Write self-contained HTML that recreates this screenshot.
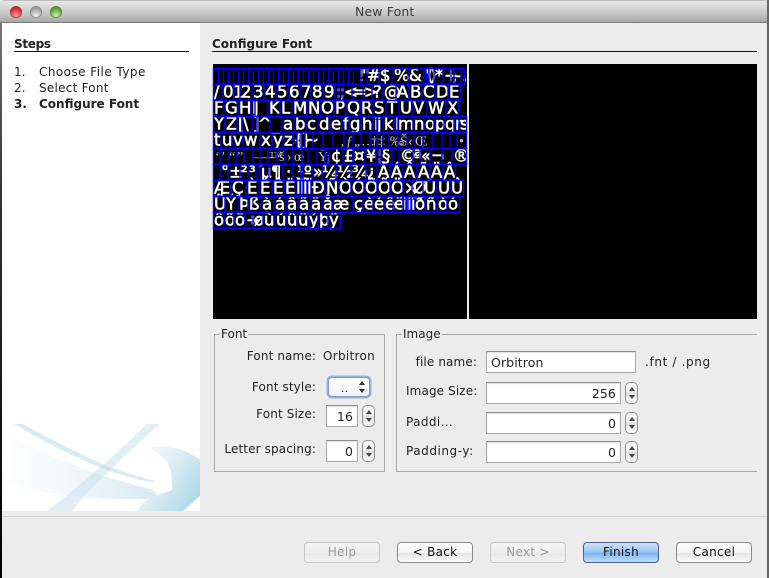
<!DOCTYPE html>
<html lang="en"><head><meta charset="utf-8"><title>New Font</title>
<style>
html,body{margin:0;padding:0;background:#555}
#w{position:relative;width:769px;height:578px;overflow:hidden;background:#ececec;font-family:"DejaVu Sans","Liberation Sans",sans-serif;font-size:12px;color:#222}
.t{position:absolute;white-space:nowrap;line-height:16px;letter-spacing:.12px}
.r{text-align:right}
.b{font-weight:bold;letter-spacing:0}
.f{position:absolute;box-sizing:border-box;background:#fff;border:1px solid #a9a9a9;border-top-color:#8e8e8e;box-shadow:inset 0 1px 1px #ddd;text-align:right;padding-right:4px;line-height:21px;height:22px;font-size:12.5px;letter-spacing:.1px}
.s{position:absolute;box-sizing:border-box;width:13px;height:22px;border:1px solid #8f8f8f;border-radius:5px;background:linear-gradient(#fff,#f4f4f4 45%,#ddd 50%,#fff)}
.s:before,.s:after{content:"";position:absolute;left:2.5px;border-left:3px solid transparent;border-right:3px solid transparent}
.s:before{top:4px;border-bottom:4px solid #444}
.s:after{bottom:4px;border-top:4px solid #444}
.g{position:absolute;box-sizing:border-box;border:1px solid #a8a8a8}
.g b{position:absolute;top:-9px;left:5px;background:#ececec;padding:0 1px;font-weight:normal;line-height:16px;font-size:12px}
.btn{position:absolute;top:542px;width:76px;height:21px;box-sizing:border-box;border:1px solid #8c8c8c;border-radius:4px;background:linear-gradient(#fff,#f5f5f5 50%,#e6e6e6 55%,#fbfbfb);text-align:center;line-height:18px;font-size:12px;color:#111;letter-spacing:.3px}
.dis{color:#999;border-color:#c4c4c4;background:linear-gradient(#f5f5f5,#eee 50%,#e8e8e8 55%,#f2f2f2)}
.def{border-color:#4d5f92;background:linear-gradient(#cfe2f8,#a0c6f0 45%,#7fb3ee 55%,#bfe0fb)}
</style></head><body><div id="w">

<div style="position:absolute;left:0;top:0;width:769px;height:23px;background:linear-gradient(#e8e8e8,#c9c9c9 55%,#a8a8a8);border-bottom:1px solid #7c7c7c;box-sizing:border-box;border-radius:5px 5px 0 0;border-top:1px solid #bbb"></div>
<div style="position:absolute;left:0;top:23px;width:2px;height:555px;background:linear-gradient(#777,#333 30%,#000)"></div>
<div style="position:absolute;right:0;top:0;width:2px;height:578px;background:#666"></div>
<svg style="position:absolute;left:0;top:0" width="80" height="24">
<defs>
<radialGradient id="ra" cx="50%" cy="80%" r="65%"><stop offset="0" stop-color="#ff9a94"/><stop offset="1" stop-color="#c8242a"/></radialGradient>
<radialGradient id="ga" cx="50%" cy="80%" r="65%"><stop offset="0" stop-color="#f0f0f0"/><stop offset="1" stop-color="#9b9b9b"/></radialGradient>
<radialGradient id="gr" cx="50%" cy="80%" r="65%"><stop offset="0" stop-color="#c8ee9c"/><stop offset="1" stop-color="#5a9a30"/></radialGradient>
</defs>
<circle cx="16" cy="12" r="5.7" fill="url(#ra)" stroke="#8a4a4a" stroke-width=".7"/>
<circle cx="36" cy="12" r="5.7" fill="url(#ga)" stroke="#808080" stroke-width=".7"/>
<circle cx="56" cy="12" r="5.7" fill="url(#gr)" stroke="#5a7a45" stroke-width=".7"/>
</svg>
<div class="t" style="left:355px;top:4px;color:#3c3c3c;font-size:12.5px">New Font</div>

<div style="position:absolute;left:2px;top:23px;width:198px;height:488px;background:#fff"></div>
<svg style="position:absolute;left:2px;top:424px" width="198" height="87" viewBox="2 424 198 87">
<defs>
<linearGradient id="l1" x1="0" x2="1" y1="0" y2="0"><stop offset="0" stop-color="#fff"/><stop offset=".5" stop-color="#eef6fa"/><stop offset="1" stop-color="#d6e9f2"/></linearGradient>
<linearGradient id="l2" x1="0" x2="1" y1="0" y2=".7"><stop offset="0" stop-color="#fff"/><stop offset=".45" stop-color="#e2f0f6"/><stop offset="1" stop-color="#b2d8e8"/></linearGradient>
</defs>
<path d="M2 433Q60 462 107 477Q135 485 153 490L160 499H147Q60 500 2 482Z" fill="url(#l1)"/>
<path d="M147 447Q160 446 170 447Q188 450 200 460V496L183 511H137L147 499L172 490L171 470Q165 455 147 447Z" fill="url(#l2)"/>
<path d="M14 424H23Q70 450 107 466Q130 474 155 481L150 482Q125 477 103 469Q50 446 14 424Z" fill="#cfe6f0" opacity=".8"/>
<path d="M147 424H160Q125 455 100 480Q85 495 72 511H47Q100 470 147 424Z" fill="#c4e0ec" opacity=".5"/>
<path d="M88 511L122 499H126L96 511ZM112 511L135 499H149L132 511Z" fill="#fff"/>
<path d="M150 489L170 471L171 473L156 489ZM160 489L171.500 477L165 489Z" fill="#fff"/>
</svg>

<div class="t b" style="left:14px;top:36px;letter-spacing:-.3px">Steps</div>
<div style="position:absolute;left:14px;top:51px;width:175px;height:1px;background:#111"></div>
<div class="t" style="left:14px;top:64px">1.</div><div class="t" style="left:39px;top:64px;letter-spacing:.45px">Choose File Type</div>
<div class="t" style="left:14px;top:80px">2.</div><div class="t" style="left:39px;top:80px;letter-spacing:.25px">Select Font</div>
<div class="t b" style="left:14px;top:96px">3.</div><div class="t b" style="left:39px;top:96px">Configure Font</div>

<div class="t b" style="left:212px;top:36px">Configure Font</div>
<div style="position:absolute;left:212px;top:51px;width:545px;height:1px;background:#111"></div>

<div style="position:absolute;left:213px;top:64px;width:254px;height:255px;background:#000"></div>
<div style="position:absolute;left:469px;top:64px;width:288px;height:255px;background:#000"></div>

<svg style="position:absolute;left:0;top:0" width="769" height="330" font-family="'DejaVu Sans',sans-serif" font-size="16.5" fill="#fff" stroke="#fff" stroke-width=".55">
<g>
<text y="81" x="358 362 367 380 394 409 425 427 430 435 444 452 455 462">!&quot;#$%&amp;'()*+,-.</text>
<text y="97.500" x="214 223 233 241 253 265 277 289 301 312 324 336 340 344 353 364 373 384 397 410 423 436 449">/0123456789:;&lt;=&gt;?@ABCDE</text>
<text y="113.500" x="214 225 239 252 254 269 281 293 308 321 335 347 361 374 387 400 413 428 447">FGHIJKLMNOPQRSTUVWX</text>
<text y="129.500" x="214 226 238 243 253 258 271 283 295 307 319 331 343 350 362 374 377 384 395 398 414 425 435 445 455 460">YZ[\]^_abcdefghijklmnopqrs</text>
<text y="145.500" x="214 222 233 244 261 273 284 293 298 301 305">tuvwxyz{|}~</text>
<text y="177.500" x="221 229 241 249 256 261 271 286 295 297 304 313 322 337 352 367 378 391 404 418 431 444">°±²³´µ¶·¸¹º»¼½¾¿ÀÁÂÃÄÅ</text>
<text y="193.500" x="214 232 247 260 273 285 296 300 303 307 312 326 339 352 365 378 391 404 413 424 438 451">ÆÇÈÉÊËÌÍÎÏÐÑÒÓÔÕÖ×ØÙÚÛ</text>
<text y="209.500" x="214 226 239 249 262 275 287 299 311 323 333 354 364 374 385 394 403 406 408 411 415 426 438 448">ÜÝÞßàáâãäåæçèéêëìíîïðñòó</text>
<text y="225.500" x="214 225 235 246 254 264 276 287 298 309 319 329">ôõö÷øùúûüýþÿ</text>
<text y="161.500" x="331 344 354 366 377 382 400 414 421 431 453">¢£¤¥¦§©ª«¬®</text>
</g>
<g font-family="'Liberation Serif',serif" font-size="14" fill="#c4c4c4" stroke="none">
<text y="145.500" x="340 346 354 361 371 378 390 400 408 415 459">‚ƒ„…†‡‰Š‹Œ•</text>
<text y="161" x="215 221 229 237 254 261 269 279 287 294 318 326">‘’“”–—™š›œŸ¡</text>
</g>
<g fill="none" stroke="#0000ff" stroke-width="1.4">
<path d="M213.500 68.500H464.500V84.500H213.500ZM218.500 68.500v16m5-16v16m5-16v16m5-16v16m5-16v16m5-16v16m5-16v16m5-16v16m5-16v16m5-16v16m5-16v16m5-16v16m5-16v16m5-16v16m5-16v16m5-16v16m5-16v16m5-16v16m5-16v16m5-16v16m5-16v16m5-16v16m5-16v16m5-16v16m5-16v16m5-16v16m5-16v16m5-16v16"/>
<path d="M361 68.500v16M367 68.500v16M379 68.500v16M393 68.500v16M408 68.500v16M424 68.500v16M426 68.500v16M429 68.500v16M434 68.500v16M443 68.500v16M451 68.500v16M454 68.500v16M461 68.500v16"/>
<path d="M213.500 84.500H460.500V100.500H213.500ZM222 84.500v16M234 84.500v16M240 84.500v16M252 84.500v16M264 84.500v16M276 84.500v16M288 84.500v16M300 84.500v16M311 84.500v16M323 84.500v16M335 84.500v16M339 84.500v16M343 84.500v16M352 84.500v16M363 84.500v16M372 84.500v16M383 84.500v16M396 84.500v16M409 84.500v16M422 84.500v16M435 84.500v16M448 84.500v16"/>
<path d="M213.500 100.500H458.500V116.500H213.500ZM224 100.500v16M238 100.500v16M251 100.500v16M255 100.500v16M268 100.500v16M280 100.500v16M292 100.500v16M307 100.500v16M320 100.500v16M334 100.500v16M346 100.500v16M360 100.500v16M373 100.500v16M386 100.500v16M399 100.500v16M412 100.500v16M427 100.500v16M446 100.500v16"/>
<path d="M213.500 116.500H466.500V132.500H213.500ZM225 116.500v16M237 116.500v16M242 116.500v16M252 116.500v16M257 116.500v16M270 116.500v16M282 116.500v16M294 116.500v16M306 116.500v16M318 116.500v16M330 116.500v16M342 116.500v16M349 116.500v16M361 116.500v16M373 116.500v16M377 116.500v16M383 116.500v16M394 116.500v16M398 116.500v16M413 116.500v16M424 116.500v16M434 116.500v16M444 116.500v16M454 116.500v16M459 116.500v16"/>
<path d="M213.500 132.500H466.500V148.500H213.500ZM221 132.500v16M232 132.500v16M243 132.500v16M260 132.500v16M272 132.500v16M283 132.500v16M293 132.500v16M297 132.500v16M301 132.500v16M305 132.500v16M313 132.500v16M323 132.500v16M333 132.500v16M344 132.500v16M353 132.500v16M361 132.500v16M370 132.500v16M377 132.500v16M383 132.500v16M389 132.500v16M398 132.500v16M407 132.500v16M414 132.500v16M423 132.500v16M433 132.500v16M442 132.500v16M450 132.500v16M457 132.500v16"/>
<path d="M213.500 148.500H466.500V164.500H213.500ZM220 148.500v16M228 148.500v16M236 148.500v16M244 148.500v16M253 148.500v16M260 148.500v16M268 148.500v16M277 148.500v16M285 148.500v16M293 148.500v16M302 148.500v16M308 148.500v16M317 148.500v16M325 148.500v16M329 148.500v16M343 148.500v16M353 148.500v16M365 148.500v16M376 148.500v16M380 148.500v16M392 148.500v16M399 148.500v16M413 148.500v16M420 148.500v16M430 148.500v16M442 148.500v16M452 148.500v16"/>
<path d="M213.500 164.500H455.500V180.500H213.500ZM220 164.500v16M228 164.500v16M240 164.500v16M248 164.500v16M256 164.500v16M260 164.500v16M269 164.500v16M283 164.500v16M293 164.500v16M301 164.500v16M303 164.500v16M312 164.500v16M322 164.500v16M336 164.500v16M351 164.500v16M366 164.500v16M377 164.500v16M390 164.500v16M403 164.500v16M417 164.500v16M430 164.500v16M443 164.500v16"/>
<path d="M213.500 180.500H463.500V196.500H213.500ZM231 180.500v16M246 180.500v16M259 180.500v16M272 180.500v16M284 180.500v16M296 180.500v16M300 180.500v16M303 180.500v16M307 180.500v16M311 180.500v16M325 180.500v16M338 180.500v16M351 180.500v16M364 180.500v16M377 180.500v16M390 180.500v16M403 180.500v16M412 180.500v16M423 180.500v16M437 180.500v16M450 180.500v16"/>
<path d="M213.500 196.500H459.500V212.500H213.500ZM225 196.500v16M238 196.500v16M248 196.500v16M261 196.500v16M274 196.500v16M286 196.500v16M298 196.500v16M310 196.500v16M322 196.500v16M332 196.500v16M353 196.500v16M363 196.500v16M373 196.500v16M384 196.500v16M393 196.500v16M403 196.500v16M406 196.500v16M408 196.500v16M411 196.500v16M415 196.500v16M425 196.500v16M437 196.500v16M447 196.500v16"/>
<path d="M213.500 212.500H340.500V228.500H213.500ZM224 212.500v16M234 212.500v16M245 212.500v16M253 212.500v16M263 212.500v16M275 212.500v16M286 212.500v16M297 212.500v16M308 212.500v16M318 212.500v16M328 212.500v16"/>
</g>
</svg>

<div class="g" style="left:214px;top:334px;width:171px;height:138px"><b>Font</b></div>
<div class="t r" style="right:453px;top:348px">Font name:</div>
<div class="t" style="left:323px;top:348px;letter-spacing:.3px">Orbitron</div>
<div class="t r" style="right:453px;top:379px">Font style:</div>
<div style="position:absolute;left:328px;top:377px;width:42px;height:20px;box-sizing:border-box;border:1px solid #7c9cc4;border-radius:4px;background:linear-gradient(#fff,#f0f4f8);box-shadow:0 0 0 1.5px #8cb4e4"></div>
<div class="t" style="left:341px;top:381px;font-size:11px">..</div>
<svg style="position:absolute;left:358px;top:380px" width="8" height="14"><path d="M4 1L7 5H1ZM4 13L7 9H1Z" fill="#333"/></svg>
<div class="t r" style="right:453px;top:406px">Font Size:</div>
<div class="f" style="left:326px;top:405px;width:32px">16</div><div class="s" style="left:362px;top:405px"></div>
<div class="t r" style="right:453px;top:441px">Letter spacing:</div>
<div class="f" style="left:326px;top:440px;width:32px">0</div><div class="s" style="left:362px;top:440px"></div>

<div class="g" style="left:396px;top:334px;width:361px;height:138px;border-right:none"><b>Image</b></div>
<div class="t r" style="right:292px;top:354px">file name:</div>
<div class="f" style="left:486px;top:351px;width:150px;text-align:left;padding-left:4px">Orbitron</div>
<div class="t" style="left:645px;top:354px;letter-spacing:.65px">.fnt / .png</div>
<div class="t" style="left:406px;top:383px">Image Size:</div>
<div class="f" style="left:486px;top:382px;width:135px">256</div><div class="s" style="left:625px;top:382px"></div>
<div class="t" style="left:406px;top:414px;letter-spacing:.4px">Paddi…</div>
<div class="f" style="left:486px;top:412px;width:135px">0</div><div class="s" style="left:625px;top:412px"></div>
<div class="t" style="left:406px;top:443px;letter-spacing:.55px">Padding-y:</div>
<div class="f" style="left:486px;top:441px;width:135px">0</div><div class="s" style="left:625px;top:441px"></div>

<div style="position:absolute;left:2px;top:516px;width:765px;height:1px;background:#d2d2d2"></div>

<div class="btn dis" style="left:304px">Help</div>
<div class="btn" style="left:397px">&lt; Back</div>
<div class="btn dis" style="left:490px">Next &gt;</div>
<div class="btn def" style="left:583px">Finish</div>
<div class="btn" style="left:676px">Cancel</div>

</div></body></html>
